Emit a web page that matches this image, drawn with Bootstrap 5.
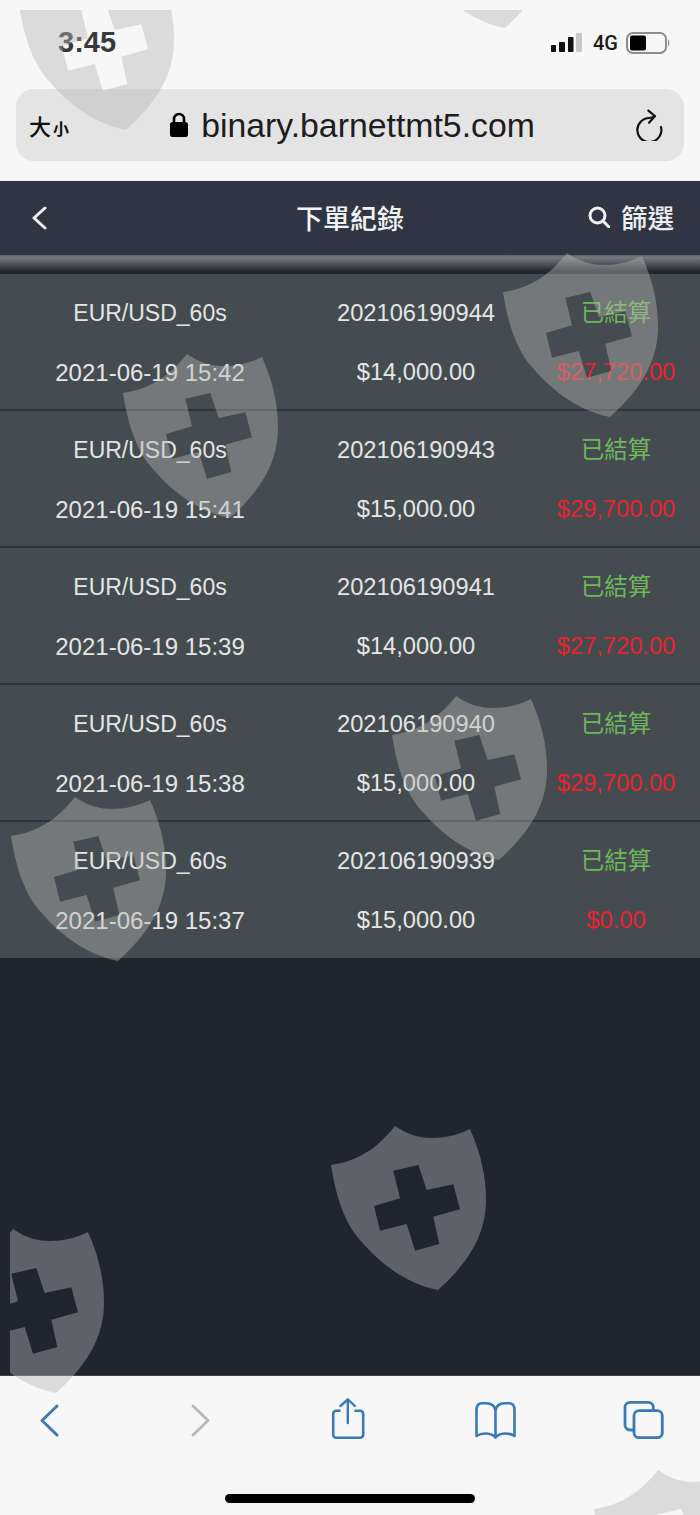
<!DOCTYPE html>
<html lang="zh-Hant">
<head>
    <meta charset="UTF-8">
    <title>下單紀錄</title>
    <link href="https://cdn.jsdelivr.net/npm/bootstrap@5.3.0/dist/css/bootstrap.min.css" rel="stylesheet">
    <style>
        html, body { margin: 0; background: #20252f; }
        body { font-family: "Liberation Sans", "Noto Sans CJK TC", sans-serif; }
        .pantalla { width: 700px; height: 1515px; position: relative; overflow: hidden; background: #20252f; }

        .cromo-top { background: #f7f7f7; height: 181px; padding-top: 24px; border-bottom: 1px solid #eeeeee; }
        .barra-estado { height: 37px; padding: 0 30px 0 58px; }
        .hora { font-size: 29px; font-weight: 700; color: #38393b; line-height: 37px; }
        .red-4g { font-family: Roboto, sans-serif; font-weight: 500; font-size: 20px; color: #1a1a1a; margin: 0 8px 0 11px; line-height: 1; }
        .barra-url { height: 72px; margin: 28px 16px 0; background: #e4e4e4; border-radius: 18px; padding: 0 20px 0 13px; position: relative; }
        .tam-a { font-family: "Noto Sans CJK TC", sans-serif; font-size: 22px; font-weight: 500; color: #111; line-height: 1; }
        .tam-b { font-family: "Noto Sans CJK TC", sans-serif; font-size: 16px; font-weight: 700; color: #111; line-height: 1; margin-left: 2px; }
        .url-centro { gap: 13px; }
        .url-texto { font-size: 33.8px; color: #1d1d1f; line-height: 1; padding-top: 2px; }

        .cabecera { height: 74px; background: #2f3542; padding: 0 26px 2px 26px; }
        .cab-lado { flex: 1 1 0; }
        .cab-atras { margin-left: 5px; margin-top: 1px; }
        .cab-titulo { font-family: "Noto Sans CJK TC", sans-serif; font-size: 27px; font-weight: 500; color: #f2f3f4; line-height: 1; }
        .cab-filtro { font-family: "Noto Sans CJK TC", sans-serif; font-size: 26.5px; font-weight: 500; color: #eceded; line-height: 1; gap: 11px; }
        .franja { height: 19px; background: linear-gradient(#5c5f64 0%, #75787c 12%, #4d5056 50%, #23272f 85%, #22262e 100%); }

        .fila-orden { height: 137px; padding-top: 10px; background: #454c4f; border-bottom: 2px solid #2c3338; }
        .fila-orden:last-child { height: 136px; border-bottom: 0; }
        .c-a { width: 300px; }
        .c-b { width: 232px; }
        .c-c { width: 168px; }
        .celda { height: 59px; line-height: 59px; font-size: 24px; color: #e4e5e6; text-align: center; white-space: nowrap; }
        .celda-par { font-size: 23px; }
        .celda-num { font-size: 23.7px; }
        .estado-ok { font-family: "Noto Sans CJK TC", sans-serif; font-size: 23.500px; line-height: 55px; color: #6fb65c; }
        .monto-rojo { font-size: 23.7px; color: #e8222c; }

        .marca-capa { position: absolute; left: 10px; top: 10px; right: 0; bottom: 0; overflow: hidden; pointer-events: none; }
        .marca { position: absolute; width: 156px; height: 164px; }

        .cromo-bottom { position: absolute; left: 0; right: 0; bottom: 0; height: 140px; background: #f7f7f7; border-top: 1px solid #39414a; }
        .iconos-nav { padding: 22px 35px 0 28px; }
        .barra-home { width: 250px; height: 9px; background: #000; border-radius: 5px; margin: 52px auto 0 auto; }
    </style>
</head>
<body>
<div class="pantalla d-flex flex-column">

    <div class="cromo-top">
        <div class="barra-estado d-flex justify-content-between align-items-center">
            <span class="hora">3:45</span>
            <div class="d-flex align-items-center">
                <svg width="31" height="19" viewBox="0 0 31 19">
                    <rect x="0" y="12" width="5" height="7" rx=".8" fill="#111"/>
                    <rect x="8" y="9" width="6" height="10" rx=".8" fill="#111"/>
                    <rect x="17" y="4" width="5.500" height="15" rx=".8" fill="#111"/>
                    <rect x="25" y="0" width="6" height="19" rx=".8" fill="#c8c8c8"/>
                </svg>
                <span class="red-4g">4G</span>
                <svg width="44" height="22" viewBox="0 0 44 22">
                    <rect x="1" y="1" width="39" height="20" rx="6" fill="none" stroke="#8d8d8d" stroke-width="2"/>
                    <rect x="4" y="3.500" width="16" height="15" rx="2" fill="#000"/>
                    <path d="M42 7.500c1.800 .5 1.800 6.500 0 7z" fill="#8d8d8d"/>
                </svg>
            </div>
        </div>
        <div class="barra-url d-flex align-items-center justify-content-between">
            <div class="d-flex align-items-baseline"><span class="tam-a">大</span><span class="tam-b">小</span></div>
            <div class="url-centro d-flex align-items-center">
                <svg width="18" height="25" viewBox="0 0 18 25">
                    <path d="M4 11V7a5 5 0 0 1 10 0v4" fill="none" stroke="#000" stroke-width="2.600"/>
                    <rect x="0" y="10" width="18" height="15" rx="2.500" fill="#000"/>
                </svg>
                <span class="url-texto">binary.barnettmt5.com</span>
            </div>
            <svg width="28" height="32" viewBox="0 0 28 32">
                <path d="M18.500 7.200C16.500 8.500 15 9 13.300 9A12 12 0 1 0 25 18" fill="none" stroke="#111" stroke-width="2.200" stroke-linecap="round"/>
                <path d="M12.300 1.700L19 7l-6 6.700" fill="none" stroke="#111" stroke-width="2.200" stroke-linecap="round" stroke-linejoin="round"/>
            </svg>
        </div>
    </div>

    <nav class="cabecera d-flex align-items-center">
        <div class="cab-lado d-flex">
            <svg class="cab-atras" width="16" height="24" viewBox="0 0 16 24"><path d="M14 2L3 12l11 10" fill="none" stroke="#f0f1f2" stroke-width="3" stroke-linecap="round" stroke-linejoin="round"/></svg>
        </div>
        <div class="cab-titulo">下單紀錄</div>
        <div class="cab-lado d-flex justify-content-end">
            <div class="cab-filtro d-flex align-items-center">
                <svg width="22" height="22" viewBox="0 0 22 22"><circle cx="9.500" cy="9.500" r="7.500" fill="none" stroke="#f0f1f2" stroke-width="3"/><path d="M15 15l6 6" stroke="#f0f1f2" stroke-width="3" stroke-linecap="round"/></svg>
                <span>篩選</span>
            </div>
        </div>
    </nav>
    <div class="franja"></div>

    <div id="listaOrdenes"></div>

    <div class="cromo-bottom">
        <div class="iconos-nav d-flex justify-content-between">
            <svg width="42" height="44" viewBox="0 0 42 44"><path d="M29 9L14 23.500 29 38" transform="translate(0 -1)" fill="none" stroke="#3b7ab8" stroke-width="3" stroke-linecap="round" stroke-linejoin="round"/></svg>
            <svg width="42" height="44" viewBox="0 0 42 44"><path d="M16 9l15 14.500L16 38" transform="translate(0 -1)" fill="none" stroke="#b9b9b9" stroke-width="3" stroke-linecap="round" stroke-linejoin="round"/></svg>
            <svg width="42" height="44" viewBox="0 0 42 44">
                <path d="M13.500 12.700H10.200a3 3 0 0 0-3 3V36.700a3 3 0 0 0 3 3H34.200a3 3 0 0 0 3-3V15.700a3 3 0 0 0-3-3H29.500" fill="none" stroke="#3b7ab8" stroke-width="2.600" stroke-linecap="round"/>
                <path d="M21.800 25V1.500M14.500 8l7.300-6.700L28.800 8" fill="none" stroke="#3b7ab8" stroke-width="2.400" stroke-linecap="round" stroke-linejoin="round"/>
            </svg>
            <svg width="42" height="44" viewBox="0 0 42 44">
                <path d="M21.500 13C21 8 18 5.300 12 5.300H8C4 5.300 2.500 8 2.500 12V38C8 34.500 17 34.500 21.500 39.500 26 34.500 35 34.500 40.500 38V12C40.500 8 39 5.300 35 5.300H31C25 5.300 22 8 21.500 13V39.500" fill="none" stroke="#3b7ab8" stroke-width="2.600" stroke-linejoin="round"/>
            </svg>
            <svg width="42" height="44" viewBox="0 0 42 44">
                <rect x="11" y="12.700" width="28.300" height="27" rx="5" fill="none" stroke="#3b7ab8" stroke-width="2.800"/>
                <path d="M11 32H7a5 5 0 0 1-5-5V9.300a5 5 0 0 1 5-5H25.300a5 5 0 0 1 5 5v3.400" fill="none" stroke="#3b7ab8" stroke-width="2.800"/>
            </svg>
        </div>
        <div class="barra-home"></div>
    </div>

    <div class="marca-capa" id="capaMarca"></div>
</div>

<svg width="0" height="0" class="d-block">
    <symbol id="escudo" viewBox="0 0 156 164">
        <path fill-rule="evenodd" d="M1 39C22 36 44 27 65 0 78 9 90 12 102 12 115 12 128 9 140 3 151 28 156 50 156 74 156 110 137 138 108 164 72 157 44 132 25 108 12 90 5 65 1 39Z
            M63.300 44.700L88.300 39 96.700 64 123.300 58.300 130 83.300 103.300 90.700 109.300 118 85 124.700 76.700 98 50 104.700 44 80 70 72.300Z"/>
    </symbol>
</svg>

<script>
    const ordenes = [
        { id: "202106190944", fecha: "2021-06-19 15:42", monto: "$14,000.00", pago: "$27,720.00" },
        { id: "202106190943", fecha: "2021-06-19 15:41", monto: "$15,000.00", pago: "$29,700.00" },
        { id: "202106190941", fecha: "2021-06-19 15:39", monto: "$14,000.00", pago: "$27,720.00" },
        { id: "202106190940", fecha: "2021-06-19 15:38", monto: "$15,000.00", pago: "$29,700.00" },
        { id: "202106190939", fecha: "2021-06-19 15:37", monto: "$15,000.00", pago: "$0.00" }
    ];

    const lista = document.getElementById("listaOrdenes");
    ordenes.forEach(o => {
        lista.innerHTML += `
            <div class="fila-orden d-flex">
                <div class="c-a"><div class="celda celda-par">EUR/USD_60s</div><div class="celda">${o.fecha}</div></div>
                <div class="c-b"><div class="celda celda-num">${o.id}</div><div class="celda celda-num">${o.monto}</div></div>
                <div class="c-c"><div class="celda estado-ok">已結算</div><div class="celda monto-rojo">${o.pago}</div></div>
            </div>`;
    });

    // posiciones de la marca de agua, relativas a la pantalla
    const marcas = [[18,-34],[397,-136],[502,253],[122,354],[391,696],[10,797],[330,1126],[-52,1229],[593,1470]];
    const capa = document.getElementById("capaMarca");
    marcas.forEach(m => {
        capa.innerHTML += `<svg class="marca" style="left:${m[0] - 10}px;top:${m[1] - 10}px" fill="#b5b5b5" fill-opacity=".42"><use href="#escudo"/></svg>`;
    });
</script>
<script src="https://cdn.jsdelivr.net/npm/bootstrap@5.3.0/dist/js/bootstrap.bundle.min.js"></script>
</body>
</html>
